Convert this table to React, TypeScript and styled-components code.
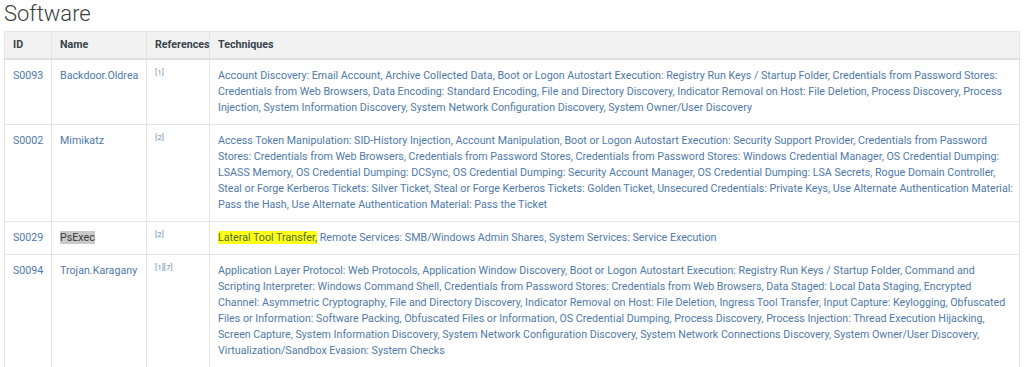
import React from "react";
import styled, { createGlobalStyle } from "styled-components";

// Page level reset
const GlobalStyle = createGlobalStyle`
  body {
    margin: 0;
    background: #ffffff;
    font-family: Roboto, "Liberation Sans", sans-serif;
  }
`;

interface Technique {
  text: string;
  highlight?: boolean;
}

interface SoftwareRow {
  id: string;
  name: string;
  refs: number[];
  nameSelected?: boolean;
  techniques: Technique[];
}

const t = (...names: string[]): Technique[] => names.map((text) => ({ text }));

const rows: SoftwareRow[] = [
  {
    id: "S0093",
    name: "Backdoor.Oldrea",
    refs: [1],
    techniques: t(
      "Account Discovery: Email Account",
      "Archive Collected Data",
      "Boot or Logon Autostart Execution: Registry Run Keys / Startup Folder",
      "Credentials from Password Stores: Credentials from Web Browsers",
      "Data Encoding: Standard Encoding",
      "File and Directory Discovery",
      "Indicator Removal on Host: File Deletion",
      "Process Discovery",
      "Process Injection",
      "System Information Discovery",
      "System Network Configuration Discovery",
      "System Owner/User Discovery"
    )
  },
  {
    id: "S0002",
    name: "Mimikatz",
    refs: [2],
    techniques: t(
      "Access Token Manipulation: SID-History Injection",
      "Account Manipulation",
      "Boot or Logon Autostart Execution: Security Support Provider",
      "Credentials from Password Stores: Credentials from Web Browsers",
      "Credentials from Password Stores",
      "Credentials from Password Stores: Windows Credential Manager",
      "OS Credential Dumping: LSASS Memory",
      "OS Credential Dumping: DCSync",
      "OS Credential Dumping: Security Account Manager",
      "OS Credential Dumping: LSA Secrets",
      "Rogue Domain Controller",
      "Steal or Forge Kerberos Tickets: Silver Ticket",
      "Steal or Forge Kerberos Tickets: Golden Ticket",
      "Unsecured Credentials: Private Keys",
      "Use Alternate Authentication Material: Pass the Hash",
      "Use Alternate Authentication Material: Pass the Ticket"
    )
  },
  {
    id: "S0029",
    name: "PsExec",
    refs: [2],
    nameSelected: true,
    techniques: [
      { text: "Lateral Tool Transfer", highlight: true },
      ...t(
        "Remote Services: SMB/Windows Admin Shares",
        "System Services: Service Execution"
      )
    ]
  },
  {
    id: "S0094",
    name: "Trojan.Karagany",
    refs: [1, 7],
    techniques: t(
      "Application Layer Protocol: Web Protocols",
      "Application Window Discovery",
      "Boot or Logon Autostart Execution: Registry Run Keys / Startup Folder",
      "Command and Scripting Interpreter: Windows Command Shell",
      "Credentials from Password Stores: Credentials from Web Browsers",
      "Data Staged: Local Data Staging",
      "Encrypted Channel: Asymmetric Cryptography",
      "File and Directory Discovery",
      "Indicator Removal on Host: File Deletion",
      "Ingress Tool Transfer",
      "Input Capture: Keylogging",
      "Obfuscated Files or Information: Software Packing",
      "Obfuscated Files or Information",
      "OS Credential Dumping",
      "Process Discovery",
      "Process Injection: Thread Execution Hijacking",
      "Screen Capture",
      "System Information Discovery",
      "System Network Configuration Discovery",
      "System Network Connections Discovery",
      "System Owner/User Discovery",
      "Virtualization/Sandbox Evasion: System Checks"
    )
  }
];

const Page = styled.div`
  padding: 0 4px;
`;

const Title = styled.h2`
  margin: 0 0 3px;
  font-family: Roboto, "Liberation Sans", sans-serif;
  font-size: 22px;
  font-weight: 300;
  line-height: 28px;
  color: #3d3d3d;
`;

const Table = styled.table`
  width: 1016px;
  border-collapse: collapse;
  table-layout: fixed;
  font-size: 10.7px;
  line-height: 16px;
  border: 1px solid #e4e4e4;
`;

const HeadCell = styled.th`
  text-align: left;
  padding: 5px 6px 5px 8px;
  background: #f2f2f2;
  color: #39434c;
  font-weight: 700;
  white-space: nowrap;
  border: 1px solid #e4e4e4;
  border-bottom: 2px solid #e0e0e0;
`;

const Cell = styled.td`
  vertical-align: top;
  padding: 8px 6px 8px 8px;
  border: 1px solid #e4e4e4;
  color: #4e79a7;
`;

const Link = styled.a<{ $selected?: boolean }>`
  color: ${(p) => (p.$selected ? "#3c3c3c" : "#4f7aa9")};
  background: ${(p) => (p.$selected ? "#c9c9c9" : "transparent")};
  text-decoration: none;
`;

const Ref = styled.sup`
  font-size: 8px;
  line-height: 0;
  vertical-align: 4px;
  color: #6f8fb4;
`;

const Marked = styled.span`
  background: #ffff1a;
  color: #4f6e1c;
`;

const Techniques: React.FC<{ items: Technique[] }> = ({ items }) => (
  <>
    {items.map((item, i) => {
      const sep = i < items.length - 1 ? ", " : "";
      if (item.highlight) {
        return (
          <React.Fragment key={i}>
            <Marked>
              {item.text}
              {sep.trim()}
            </Marked>{" "}
          </React.Fragment>
        );
      }
      return (
        <React.Fragment key={i}>
          <Link href="#">{item.text}</Link>
          {sep}
        </React.Fragment>
      );
    })}
  </>
);

const App: React.FC = () => {
  return (
    <Page>
      <GlobalStyle />
      <Title>Software</Title>
      <Table>
        <colgroup>
          <col style={{ width: 47 }} />
          <col style={{ width: 95 }} />
          <col style={{ width: 63 }} />
          <col />
        </colgroup>
        <thead>
          <tr>
            <HeadCell>ID</HeadCell>
            <HeadCell>Name</HeadCell>
            <HeadCell>References</HeadCell>
            <HeadCell>Techniques</HeadCell>
          </tr>
        </thead>
        <tbody>
          {rows.map((row) => (
            <tr key={row.id}>
              <Cell>
                <Link href="#">{row.id}</Link>
              </Cell>
              <Cell>
                <Link href="#" $selected={row.nameSelected}>
                  {row.name}
                </Link>
              </Cell>
              <Cell>
                {row.refs.map((r) => (
                  <Ref key={r}>[{r}]</Ref>
                ))}
              </Cell>
              <Cell>
                <Techniques items={row.techniques} />
              </Cell>
            </tr>
          ))}
        </tbody>
      </Table>
    </Page>
  );
};

export default App;
